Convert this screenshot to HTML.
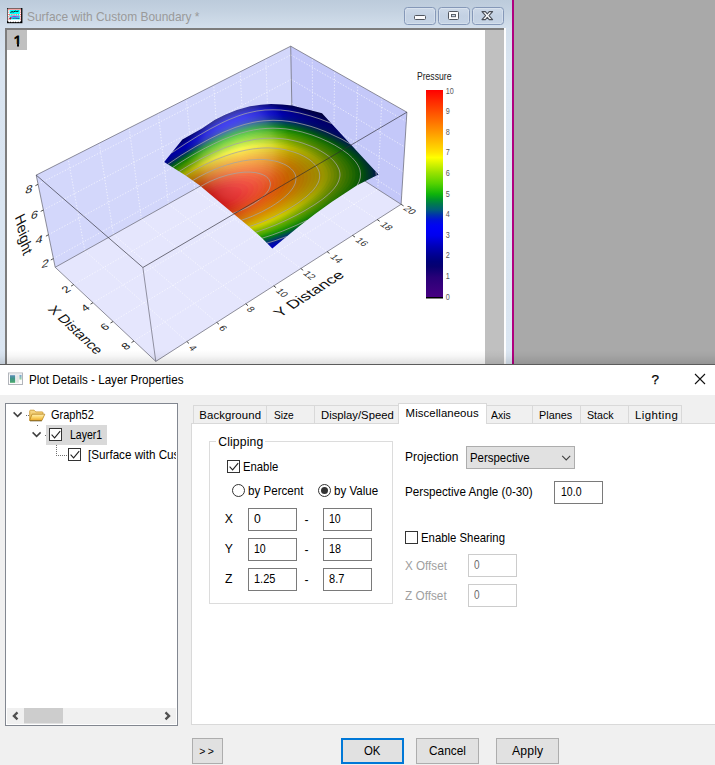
<!DOCTYPE html>
<html lang="en">
<head>
<meta charset="utf-8">
<title>Plot Details - Layer Properties</title>
<style>
html,body{margin:0;padding:0;}
body{width:715px;height:765px;overflow:hidden;position:relative;background:#f0f0f0;
  font-family:"Liberation Sans",Arial,sans-serif;font-size:12.2px;color:#000;}
.abs,.t{position:absolute;}
.t{white-space:nowrap;line-height:16px;height:16px;transform-origin:0 50%;}
#top{position:absolute;left:0;top:0;width:715px;height:365px;background:#a9a9a9;overflow:hidden;}
#frame{position:absolute;left:0;top:0;width:512px;height:365px;
  background:linear-gradient(#bccbdb 0px,#c3d1e0 10px,#d3dfec 28px,#d9e4f0 60px,#dbe6f2 365px);}
#mag{position:absolute;left:512px;top:0;width:2px;height:365px;background:#b0007f;}
#wl{position:absolute;left:504px;top:28px;width:2px;height:337px;background:#fdfdfe;}
#shadow{position:absolute;left:0;top:350px;width:715px;height:14px;background:linear-gradient(rgba(0,0,0,0),rgba(0,0,0,0.03) 40%,rgba(0,0,0,0.12));}
#client{position:absolute;left:5px;top:28px;width:499px;height:337px;background:#c0c0c0;
  border-left:2px solid #7d7d7d;border-top:2px solid #7d7d7d;box-sizing:border-box;}
#page{position:absolute;left:7px;top:30px;width:478px;height:334px;background:#fff;}
#one{position:absolute;left:7px;top:30px;width:20px;height:20px;background:#c0c0c0;}
#topline{position:absolute;left:0;top:364px;width:715px;height:1px;background:#5c5c5c;}
.wbtn{position:absolute;top:7px;height:18px;box-sizing:border-box;border:1px solid #8598b8;border-radius:3.5px;
  background:linear-gradient(#cdd9e8,#c3d1e3 50%,#c6d4e5);box-shadow:inset 0 0 0 1px rgba(255,255,255,0.25);}
#dlgtitle{position:absolute;left:0;top:365px;width:715px;height:30px;background:#fff;}
#tree{position:absolute;left:5px;top:403px;width:173px;height:323px;box-sizing:border-box;border:1px solid #828790;background:#fff;overflow:hidden;}
.tab{position:absolute;top:405px;height:19px;box-sizing:border-box;border:1px solid #d9d9d9;border-bottom:none;background:#f0f0f0;}
#tabsel{position:absolute;left:398px;top:403px;width:89px;height:21px;box-sizing:border-box;border:1px solid #d9d9d9;border-bottom:none;background:#fff;}
#panel{position:absolute;left:191px;top:423px;width:540px;height:302px;box-sizing:border-box;border:1px solid #d9d9d9;background:#fff;}
.inp{position:absolute;box-sizing:border-box;border:1px solid #7a7a7a;background:#fff;height:23px;}
.inp.dis{border-color:#cccccc;}
.cb{position:absolute;width:13px;height:13px;box-sizing:border-box;border:1px solid #333;background:#fff;}
.rb{position:absolute;width:13px;height:13px;box-sizing:border-box;border:1px solid #333;border-radius:50%;background:#fff;}
.btn{position:absolute;top:738px;height:26px;box-sizing:border-box;border:1px solid #adadad;background:#e1e1e1;}
svg{position:absolute;overflow:visible;}
</style>
</head>
<body>
<!-- ================= graph window ================= -->
<div id="top">
  <div id="frame"></div>
  <div id="client"></div>
  <div id="page"></div>
  <div id="one"></div>
  <div id="wl"></div>
  <div id="mag"></div>
  <svg id="plot" style="left:0;top:0" width="511" height="365" viewBox="0 0 511 365" font-family="'Liberation Sans',Arial,sans-serif">
<defs><clipPath id="sil"><polygon points="164.2,162 182.4,139.6 202,128.4 214.5,120 225,114.8 236.8,109.9 250,106.2 261,104.7 271,104.1 282,104.4 292,105.5 308.7,109.7 322,113.2 378.5,174.5 357.1,185.3 332,201.7 315,214 298.9,226.5 284.9,238 272.3,248.5 261.2,237.3 248.6,226.2 233.2,213.6 215,198.2 199.2,185 185.2,175.2"/></clipPath>
<radialGradient id="lit" gradientUnits="userSpaceOnUse" cx="0" cy="0" r="1" gradientTransform="translate(240 147) rotate(-17.5) scale(130 300)"><stop offset="0" stop-color="#000" stop-opacity="0.03"/><stop offset="0.12" stop-color="#000" stop-opacity="0.08"/><stop offset="0.25" stop-color="#000" stop-opacity="0.17"/><stop offset="0.42" stop-color="#000" stop-opacity="0.31"/><stop offset="0.6" stop-color="#000" stop-opacity="0.42"/><stop offset="0.95" stop-color="#000" stop-opacity="0.55"/><stop offset="1" stop-color="#000" stop-opacity="0.56"/></radialGradient>
<radialGradient id="lit2" gradientUnits="userSpaceOnUse" cx="0" cy="0" r="1" gradientTransform="translate(238 152) scale(52 72)"><stop offset="0" stop-color="#fff" stop-opacity="0.31"/><stop offset="0.3" stop-color="#fff" stop-opacity="0.29"/><stop offset="0.5" stop-color="#fff" stop-opacity="0.25"/><stop offset="0.66" stop-color="#fff" stop-opacity="0.19"/><stop offset="0.8" stop-color="#fff" stop-opacity="0.09"/><stop offset="1" stop-color="#fff" stop-opacity="0"/></radialGradient>
<radialGradient id="lit3" gradientUnits="userSpaceOnUse" cx="0" cy="0" r="1" gradientTransform="translate(322 100) rotate(30) scale(85 38)"><stop offset="0" stop-color="#000" stop-opacity="0.34"/><stop offset="0.5" stop-color="#000" stop-opacity="0.24"/><stop offset="1" stop-color="#000" stop-opacity="0"/></radialGradient>
<linearGradient id="cbar" x1="0" y1="0" x2="0" y2="1"><stop offset="0%" stop-color="#ff0000"/><stop offset="2.5%" stop-color="#ff1300"/><stop offset="5%" stop-color="#ff2600"/><stop offset="7.5%" stop-color="#ff3800"/><stop offset="10%" stop-color="#ff4b00"/><stop offset="12.5%" stop-color="#ff5e00"/><stop offset="15%" stop-color="#ff7000"/><stop offset="17.5%" stop-color="#ff8300"/><stop offset="20%" stop-color="#ff9600"/><stop offset="22.5%" stop-color="#ffaa00"/><stop offset="25%" stop-color="#ffbd00"/><stop offset="27.5%" stop-color="#ffd000"/><stop offset="30%" stop-color="#ffe400"/><stop offset="32.5%" stop-color="#ffff00"/><stop offset="35%" stop-color="#dcf500"/><stop offset="37.5%" stop-color="#b9eb00"/><stop offset="40%" stop-color="#96e100"/><stop offset="42.5%" stop-color="#76da00"/><stop offset="45%" stop-color="#55d200"/><stop offset="47.5%" stop-color="#32c305"/><stop offset="50%" stop-color="#0fb40a"/><stop offset="52.5%" stop-color="#009628"/><stop offset="55%" stop-color="#007850"/><stop offset="57.5%" stop-color="#005f78"/><stop offset="60%" stop-color="#0034aa"/><stop offset="62.5%" stop-color="#0012d9"/><stop offset="65%" stop-color="#0005f2"/><stop offset="67.5%" stop-color="#0000f7"/><stop offset="70%" stop-color="#0000ee"/><stop offset="72.5%" stop-color="#0000d4"/><stop offset="75%" stop-color="#0000b9"/><stop offset="77.5%" stop-color="#0000a2"/><stop offset="80%" stop-color="#00008c"/><stop offset="82.5%" stop-color="#000079"/><stop offset="85%" stop-color="#070070"/><stop offset="87.5%" stop-color="#170074"/><stop offset="90%" stop-color="#280078"/><stop offset="92.5%" stop-color="#30007a"/><stop offset="95%" stop-color="#38007d"/><stop offset="97.5%" stop-color="#400080"/><stop offset="100%" stop-color="#480082"/></linearGradient>
</defs>
<polygon points="55.2,267.3 155.8,361.4 401.1,204.3 292.4,134.5" fill="#e5e6fd"/>
<polygon points="36.2,175.1 55.2,267.3 292.4,134.5 290.7,46.2" fill="#d3d7fb"/>
<polygon points="290.7,46.2 292.4,134.5 401.1,204.3 406.9,112.2" fill="#c4c8f9"/>
<path d="M73.7 284.6L312.6 147.5M312.6 147.5L312.3 58.4M93 302.7L333.6 160.9M333.6 160.9L334.6 71.1M113.1 321.5L355.3 174.9M355.3 174.9L357.8 84.3M134 341L377.8 189.3M377.8 189.3L381.9 98M84.8 250.7L186.8 341.5M84.8 250.7L68.2 158.9M113.5 234.6L216.7 322.4M113.5 234.6L99.2 143.2M141.4 219L245.7 303.8M141.4 219L129.2 128M168.4 203.9L273.7 285.9M168.4 203.9L158.3 113.3M194.7 189.2L300.8 268.5M194.7 189.2L186.4 99M220.1 174.9L327.1 251.7M220.1 174.9L213.7 85.2M244.9 161L352.5 235.4M244.9 161L240.1 71.8M269 147.6L377.2 219.6M269 147.6L265.8 58.8M53.4 258.6L292.2 126M292.2 126L401.7 195.6M48.5 234.7L291.8 103.1M291.8 103.1L403.2 171.7M43.4 210L291.3 79.4M291.3 79.4L404.7 147M38.1 184.3L290.9 55M290.9 55L406.3 121.4" fill="none" stroke="#ffffff" stroke-width="0.75" stroke-opacity="0.82" stroke-dasharray="1.3 1.7"/>
<path d="M55.2 267.3L292.4 134.5M292.4 134.5L401.1 204.3M290.7 46.2L292.4 134.5M36.2 175.1L290.7 46.2M290.7 46.2L406.9 112.2M36.2 175.1L55.2 267.3M55.2 267.3L155.8 361.4M155.8 361.4L401.1 204.3M401.1 204.3L406.9 112.2" fill="none" stroke="#62626e" stroke-width="0.7"/>
<g clip-path="url(#sil)"><g opacity="0.999">
<rect x="150" y="90" width="245" height="175" fill="#00008c"/>
<path d="M326 115.7 312 110.8 301 107.7 292 105.8 282 104.4 276 103.9 272 103.8 263 104.2 258 104.8 253 105.7 245 107.8 239 109.7 231 112.9 224 116.1 217 119.7 208 124.7 201 128.8 190 135.7 179 142.9 177.1 144.2 163.3 161.2 163 161.8 163.1 162.4 163.6 163 184.5 176.2 198.5 186 232.4 214.5 247.8 227.1 260.4 238.2 271.5 249.4 272.1 249.7 272.7 249.6 299.6 227.4 315.7 215 332.7 202.7 357.7 186.3 379 175.6 379.6 174.9 379.7 174.2 379.4 173.7Z" fill="#00009c"/>
<path d="M327.3 117.2 315 112.7 304 109.4 293 106.9 283 105.4 274 104.8 265 105.1 256 106.2 247 108.2 241 110 234 112.6 228 115.2 221 118.5 213 122.8 205 127.3 187 138.5 175.6 146 163.3 161.2 163 161.8 163.1 162.4 163.6 163 184.5 176.2 198.5 186 232.4 214.5 247.8 227.1 260.4 238.2 271.5 249.4 272.1 249.7 272.7 249.6 299.6 227.4 315.7 215 332.7 202.7 357.7 186.3 379 175.6 379.6 175 379.7 174.3 379.4 173.7Z" fill="#0000a9"/>
<path d="M328.6 118.6 316 114 305 110.6 294 108 284 106.5 275 105.8 266 106 257 107 248 108.9 242 110.7 236 112.8 230 115.3 224 118 217 121.5 210 125.4 193 135.5 174.2 147.8 163.3 161.2 163 162.3 163.6 163 184.5 176.2 198.5 186 232.4 214.5 247.8 227.1 260.4 238.2 271.5 249.4 272.1 249.7 272.7 249.6 299.6 227.4 315.7 215 332.7 202.7 357.7 186.3 379 175.6 379.6 175 379.7 174.3 379.4 173.7Z" fill="#0000b7"/>
<path d="M329.9 120 318 115.6 307 112.1 296 109.4 286 107.7 276 106.8 267 106.9 258 107.8 249 109.7 244 111 238 113 232 115.4 226 118 213 124.6 197 133.9 185 141.5 172.7 149.6 163.3 161.2 163 162.3 163.6 163 184.5 176.2 198.5 186 232.4 214.5 247.8 227.1 260.4 238.2 271.5 249.4 272.5 249.7 273.1 249.4 299.6 227.4 315.7 215 332.7 202.7 357.7 186.3 379 175.6 379.6 175 379.7 174.3 379.4 173.7Z" fill="#0000c6"/>
<path d="M331 121.4 319 116.8 308 113.3 297 110.5 287 108.8 277 107.8 268 107.8 259 108.7 250 110.4 245 111.7 239 113.7 234 115.5 228 118.1 222 120.9 215 124.5 201 132.4 186 141.7 171.2 151.4 163.3 161.2 163 162.3 163.6 163 184.5 176.2 198.5 186 232.4 214.5 247.8 227.1 260.4 238.2 271.5 249.4 272.5 249.7 273.1 249.4 299.6 227.4 315.7 215 332.7 202.7 357.7 186.3 379 175.6 379.6 175 379.7 174.3 379.4 173.7Z" fill="#0000d6"/>
<path d="M332.6 123 320 118.1 309 114.5 298 111.7 288 109.8 278 108.9 269 108.8 260 109.5 251 111.2 246 112.4 240 114.3 235 116.1 229 118.6 217 124.3 204 131.5 187 141.8 169.8 153.3 163.3 161.2 163 162.3 163.6 163 184.5 176.2 198.5 186 232.4 214.5 247.8 227.1 260.4 238.2 271.5 249.4 272.5 249.7 273.1 249.4 299.6 227.4 315.7 215 332.7 202.7 357.7 186.3 379 175.6 379.6 175 379.7 174.3 379.4 173.7Z" fill="#0000e6"/>
<path d="M334 124.6 328 122 320 119 310.8 116 299.6 113 289.3 111 280.7 110 269 109.8 264.9 110 257 111 251.8 112 244 114 238 116 232.8 118 228 120 221.6 123 210 129 197.9 136 188.1 142 169.9 154 168.1 155.3 163.2 161.3 163 162.3 163.6 163 184.5 176.2 198.5 186 232.4 214.5 247.8 227.1 260.4 238.2 271.5 249.4 272.5 249.7 273.1 249.4 299.6 227.4 315.7 215 332.7 202.7 357.7 186.3 379 175.6 379.6 175 379.7 174.3 379.4 173.7Z" fill="#0000f1"/>
<path d="M336.2 127 324 122 312.4 118 301 114.9 291 112.8 281 111.6 272 111.3 267 111.5 262 111.9 253 113.3 248 114.5 243 115.9 233 119.5 222 124.3 210 130.5 201 135.6 192 140.9 182 147.2 173 153.2 165.8 158.2 163.2 161.3 163 162.3 163.6 163 184.5 176.2 198.5 186 232.4 214.5 247.8 227.1 260.4 238.2 271.3 249.2 274.4 248.3 299.6 227.4 315.7 215 332.7 202.7 357.7 186.3 379 175.6 379.5 175.1 379.7 174.3 379.4 173.7Z" fill="#0000f6"/>
<path d="M339 129.8 326 124.3 315 120.4 304 117.2 293 114.7 283 113.4 274 112.9 269 113 264 113.3 255 114.6 246 116.7 236 119.9 225 124.5 214 129.8 200 137.6 184 147.3 174 153.8 164 160.7 163.2 161.3 163 162.3 163.6 163 184.5 176.2 198.5 186 232.4 214.5 247.8 227.1 260.4 238.2 270.3 248.2 276.9 246.2 299.6 227.4 315.7 215 332.7 202.7 357.7 186.3 379 175.6 379.5 175.1 379.7 174.3 379.4 173.7Z" fill="#0000fb"/>
<path d="M341.6 132.7 329 127.1 318 123 307 119.5 296 116.9 286 115.3 276 114.5 271 114.5 266 114.8 257 115.8 248 117.7 238 120.8 228 124.7 217 129.8 205 136.2 191 144.3 176 153.8 163.2 162.7 184.5 176.2 198.5 186 232.4 214.5 247.8 227.1 260.4 238.2 269.3 247.2 279.5 244 299.6 227.4 315.7 215 332.7 202.7 357.7 186.3 379 175.6 379.5 175.1 379.7 174.3 379.4 173.7Z" fill="#0006ef"/>
<path d="M344.6 135.9 332 130 321 125.6 309 121.7 298 118.9 287 117 277 116.2 272 116.1 267 116.3 258 117.3 249 119.1 239 122 229 125.8 218 130.8 205 137.6 191 145.7 177 154.5 164.1 163.3 184.5 176.2 198.5 186 232.4 214.5 247.8 227.1 260.4 238.2 268.3 246.2 282.3 241.8 299.6 227.4 315.7 215 332.7 202.7 357.7 186.3 379 175.6 379.5 175.2 379.7 174.4 379.4 173.7Z" fill="#000ee0"/>
<path d="M347.8 139.4 336 133.5 324 128.4 312 124.2 301 121.1 290 119 280 117.9 275 117.7 270 117.8 265 118.1 260 118.6 255 119.4 250 120.4 240 123.3 230 126.9 219 131.8 206 138.5 192 146.5 178 155.2 165.1 164 184.5 176.2 198.5 186 232.4 214.5 247.8 227.1 260.4 238.2 267.3 245.2 276 242.5 285.1 239.4 299.6 227.4 315.7 215 332.7 202.7 357.7 186.3 379 175.6 379.5 175.2 379.7 174.4 379.4 173.7Z" fill="#0018cf"/>
<path d="M351.6 143.5 345.5 140 339.7 137 328 131.6 316 127.1 304 123.5 293 121.1 287 120.2 282 119.7 272 119.3 267 119.5 262 120 257 120.6 252 121.6 242 124.2 231 128.1 220 132.8 207 139.4 193 147.2 179 155.9 166.1 164.6 184.5 176.2 198.5 186 232.4 214.5 247.8 227.1 260.4 238.2 266.3 244.2 277 240.8 288.2 236.8 299.6 227.4 315.7 215 332.7 202.7 357.7 186.3 378.3 176 378.1 172.3Z" fill="#0030af"/>
<path d="M356 148.3 347 142.6 340 138.8 334 135.8 322 130.7 310 126.6 299 123.7 294 122.7 287 121.6 280 121 275 120.7 270 120.8 264 121.2 259 121.8 254 122.6 245 124.7 239 126.5 233 128.7 221 133.7 209 139.6 196 146.7 181 155.8 167 165.2 184.5 176.2 198.5 186 232.4 214.5 247.8 227.1 260.4 238.2 265.4 243.3 278 239.3 291.2 234.4 299.6 227.4 315.7 215 332.7 202.7 357.7 186.3 375.2 177.5 375.4 175 375.3 173 374.8 170 374 167.9Z" fill="#004a91"/>
<path d="M362.1 155 358 151.6 353.1 148 348 144.7 342 141.2 335.7 138 329.3 135 322.1 132 316 129.8 309 127.5 303 125.8 297 124.5 291 123.3 285 122.5 279 122.1 273 121.9 268 122.1 263 122.5 258 123.1 253 124 247 125.4 242 126.8 236 128.7 224 133.5 211 139.6 196 147.7 181 156.8 167.7 165.6 184.5 176.2 198.5 186 232.4 214.5 247.8 227.1 260.4 238.2 264.7 242.5 278.7 238 293.8 232.3 299.6 227.4 315.7 215 332.7 202.7 357.7 186.3 372.6 178.8 373.1 176 373 173 372.5 170 371.4 167 369.8 164 367.7 161Z" fill="#006274"/>
<path d="M369.9 180.2 370.7 176 370.6 172 369.5 168 368.6 166 366.8 163 363.7 159 359 154.4 353.5 150 347.6 146 339 141 331 137.1 323 133.6 314 130.3 305 127.5 297 125.6 289 124.2 281 123.4 275 123.1 269 123.2 263 123.6 257 124.4 251 125.6 245 127 239 128.8 232 131.3 225 134.1 218 137.2 210 141.2 202 145.4 193 150.5 185 155.3 176 161 168.5 166.1 184.5 176.2 198.5 186 232.4 214.5 247.8 227.1 260.4 238.2 264 241.8 272 239.3 280 236.5 296.4 230.1 315.7 215 332.7 202.7 357.7 186.3Z" fill="#00705c"/>
<path d="M367 181.6 368.3 177 368.4 173 367.5 169 366.7 167 365.1 164 362.2 160 358.4 156 353.8 152 347 147.2 340 143 332 138.9 323 134.9 314 131.5 305.9 129 297 126.8 289 125.4 281 124.5 275 124.3 269 124.4 263 124.8 257 125.6 251 126.7 245 128.2 239 129.9 232 132.4 225 135.2 218 138.3 210 142.2 202 146.4 193 151.5 185 156.2 177 161.3 169.2 166.6 184.5 176.2 198.5 186 232.4 214.5 247.8 227.1 260.4 238.2 263.2 241.1 272 238.3 281 235.1 290 231.7 299.2 227.8 315.7 215 332.7 202.7 357.7 186.3Z" fill="#008144"/>
<path d="M364 183.1 365.5 179 366.1 175 365.7 171 365 168.5 363.9 166 361.5 162 358.1 158 353.8 154 348 149.6 340.9 145 333.5 141 325 137 316 133.4 308 130.8 299 128.4 290 126.7 282 125.8 276 125.5 270 125.5 264 125.8 258 126.6 252 127.6 246 129 240 130.7 233 133.1 226 135.8 219 138.9 211 142.7 203 146.9 195 151.3 186 156.6 178 161.6 170 167 184.5 176.2 198.5 186 232.4 214.5 247.8 227.1 260.4 238.2 262.5 240.3 272 237.3 282 233.7 292 229.8 302.6 225.1 315.7 215 332.7 202.7 357.7 186.3Z" fill="#00932c"/>
<path d="M360.6 184.9 362.9 180 363.7 176 363.6 172 362.5 168 360.4 164 359.1 162 357 159.4 352.5 155 347.5 151 341 146.6 333 142.1 325 138.3 316.8 135 308 132 300 129.9 291 128.1 283 127 276 126.6 270 126.6 264 127 258 127.7 252 128.8 246 130.2 240 131.9 233 134.2 226 136.9 219 140 211 143.8 203 147.9 195 152.3 186 157.6 178 162.6 170.7 167.5 184.5 176.2 198.5 186 232.4 214.5 247.8 227.1 260.4 238.2 261.8 239.6 273 236 283.8 232 295 227.4 306.3 222.2 315.7 215 332.7 202.7 357.7 186.3Z" fill="#08a519"/>
<path d="M357 186.7 358.7 184 359.7 182 361 178 361.4 174 360.8 170 359.2 166 356.7 162 353 157.7 347.7 153 340.6 148 333.8 144 325.7 140 318 136.7 309 133.6 299.7 131 293 129.6 284 128.3 278 127.9 272 127.8 266 128 259 128.7 253 129.7 247.1 131 241 132.7 234 134.9 226 138 219 141 211 144.8 203 148.9 195.5 153 187 158 179 162.9 171.4 168 184.5 176.2 198.5 186 232.4 214.5 247.8 227.1 261.1 238.9 273 235 286 230.1 297.9 225 310.5 219 315.7 215 332.7 202.7Z" fill="#13b609"/>
<path d="M350.6 191 353 188.2 354.6 186 356.9 182 358.2 178 358.5 174 357.9 170 356.4 166 353.9 162 352 159.7 349.4 157 344 152.5 337.5 148 330 143.8 321 139.5 312 136.1 303 133.3 294 131.2 286 129.9 279 129.3 273 129.1 267 129.3 261 129.8 255 130.7 248 132.1 242 133.7 235 135.9 228 138.5 221 141.4 213 145 205 149 197 153.3 188 158.5 180 163.4 172.3 168.5 184.5 176.2 198.5 186 232.4 214.5 247.8 227.1 260.2 238 273 233.8 286 228.8 299.2 223 313.5 216 316.4 214.5 332.7 202.7Z" fill="#27be07"/>
<path d="M338 199.2 343.2 195 348.4 190 350.8 187 352.2 185 354.2 181 355.1 178 355.4 176 355.5 174 355.3 172 354.9 170 354 167.5 352.8 165 351.5 163 348 158.8 342.7 154 335.6 149 328 144.6 319 140.4 310 137 301 134.3 292 132.4 285 131.3 279 130.8 272 130.6 266 130.9 260 131.4 253 132.5 246 134.1 239 136 232 138.3 224 141.4 216 144.9 207 149.3 199 153.5 190 158.6 181 164.1 173.3 169.1 184.5 176.2 198.5 186 232.4 214.5 247.8 227.1 259.2 237.1 269 234 279.7 230 290 225.7 301 220.7 312.3 215 321.3 210 328.7 205.5 332.7 202.7Z" fill="#3dc803"/>
<path d="M258.2 236.2 270 232.3 281.3 228 292.8 223 305 217.1 315 211.8 324.9 206 333.8 200 340.1 195 345.2 190 348.4 186 350.2 183 351.1 181 352.2 177 352.4 174 352.2 172 351.1 168 349 164 345.9 160 343 157 339.4 154 336 151.5 332 148.9 326.9 146 322 143.6 316.1 141 310.9 139 305 137.1 300 135.7 294 134.3 289 133.4 283 132.7 278 132.3 272 132.1 267 132.3 257 133.3 247 135.2 236 138.4 225 142.4 212 148.1 199 154.7 186 162.2 174.3 169.7 184.5 176.2 198.5 186 232.4 214.5 247.8 227.1Z" fill="#52d100"/>
<path d="M257.2 235.4 269 231.4 280 227.2 291 222.4 302.1 217 313 211.2 321.8 206 330.7 200 337 195 342.1 190 345.3 186 347.6 182 348.9 178 349.3 175 349.2 173 348.9 171 348.4 169 346.5 165 343.6 161 340.8 158 337.4 155 334 152.5 330.2 150 326 147.5 321 145 316 142.7 310 140.4 305 138.7 299 137 294 135.9 288 134.8 282 134.1 277 133.7 272 133.6 267 133.8 257 134.8 247 136.7 236 139.7 225 143.7 213 148.9 200 155.5 187 162.8 175.2 170.3 184.5 176.2 198.5 186 232.4 214.5 247.8 227.1Z" fill="#65d600"/>
<path d="M256.2 234.5 267 230.9 278 226.6 288.7 222 300 216.5 310.3 211 320.3 205 327.6 200 333.9 195 339 190 342.2 186 344.5 182 345.8 178 346.2 175 346.1 173 345.8 171 345.2 169 343.3 165 340.4 161 337.5 158 334 155 330 152.1 326.6 150 322 147.4 317 145 312 142.9 307 141.1 302 139.5 296.3 138 291 136.9 286 136.1 281 135.5 276 135.2 271 135.1 266 135.3 256 136.4 246 138.3 236 141.1 225 145.1 213 150.2 200 156.7 188 163.5 176.2 171 184.5 176.2 198.5 186 232.4 214.5 247.8 227.1Z" fill="#79da00"/>
<path d="M255.2 233.6 266 230 277 225.7 287.7 221 299 215.4 308.9 210 318.7 204 325.8 199 331.9 194 336.8 189 339.8 185 341.8 181 342.9 177 343.1 175 343 173 342.7 171 342.1 169 340.2 165 337.1 161 335 158.8 331.8 156 327.7 153 324 150.7 319.2 148 315 146 310 143.9 305 142.1 300 140.6 295 139.3 290 138.3 285 137.5 280 137 275 136.7 270 136.7 265 136.9 255 138 245 140 235 142.8 224 146.8 212 152 200 158 188 164.7 177.2 171.6 184.5 176.2 198.5 186 232.4 214.5 247.8 227.1Z" fill="#8cdf00"/>
<path d="M254.2 232.7 266 228.7 276 224.8 286 220.3 296 215.4 305 210.5 315 204.4 322.8 199 328.8 194 333.7 189 336.7 185 338.7 181 339.8 177 340 175 339.9 173 339.5 171 338.9 169 336.9 165 333.8 161 331 158.2 328.4 156 325 153.6 320.8 151 316 148.4 312 146.6 303 143.2 298 141.7 293 140.5 288 139.5 283 138.8 274 138.2 264 138.4 254 139.6 244 141.6 234 144.5 223 148.5 212 153.3 200 159.2 189 165.4 178.1 172.2 184.5 176.2 198.5 186 232.4 214.5 247.8 227.1Z" fill="#a1e400"/>
<path d="M253.2 231.8 264 228.2 274 224.3 283.7 220 293.8 215 304 209.4 312.7 204 319.8 199 325.9 194 330.7 189 333.7 185 335.7 181 336.8 177 336.9 175 336.8 173 336.5 171 335.9 169 335 167 333.8 165 330.6 161 328 158.5 324.9 156 322 154 318 151.5 310 147.6 301 144.3 292 141.9 287 140.9 282 140.2 273 139.6 268 139.6 263 139.9 254 140.9 244 143 234 145.8 224 149.4 213 154 201 159.9 190 166 179.1 172.8 184.5 176.2 198.5 186 232.4 214.5 247.8 227.1Z" fill="#b6ea00"/>
<path d="M252.2 231 263 227.3 273 223.4 282.8 219 292.8 214 301.8 209 309.8 204 316.9 199 322.9 194 327.8 189 330.7 185 332.7 181 333.4 179 333.8 177 333.9 175 333.8 173 333.4 171 332.8 169 331 165.6 328.3 162 326 159.7 322.8 157 320 155 316 152.6 312 150.5 308 148.6 303.9 147 299 145.4 290 143.1 281 141.7 272 141.1 267 141.1 262 141.4 253 142.5 243 144.6 233 147.4 223 151 212 155.7 201 161.1 190 167.2 180 173.4 184.5 176.2 198.5 186 232.4 214.5 247.8 227.1Z" fill="#caf000"/>
<path d="M251.3 230.1 261 226.9 270.8 223 280 218.9 289.9 214 298.9 209 306.9 204 314 199 320 194 324.8 189 327.7 185 329.7 181 330.4 179 330.7 177 330.9 175 330.7 173 330.3 171 329.7 169 328.7 167 327.4 165 325 162 322 159.2 319.3 157 313 153.1 309 151 305 149.3 297 146.5 288 144.3 279 143 270 142.5 261 142.9 252 144 243 145.9 233 148.7 223 152.3 212 156.9 201 162.3 191 167.8 181 174 184.5 176.2 198.5 186Z" fill="#e0f600"/>
<path d="M250.3 229.3 260 226 270.1 222 279 218 288.9 213 297.7 208 305.6 203 312.4 198 318.2 193 321.9 189 324.8 185 326.7 181 327.4 179 327.7 177 327.8 175 327.7 173 327.2 171 326.5 169 325.5 167 324.2 165 321.7 162 319.5 160 317 158 314.1 156 310.8 154 306.8 152 303 150.3 295 147.6 287 145.7 278 144.4 269 144 260 144.4 251 145.6 242 147.5 233 150 223 153.5 213 157.7 202 163 192 168.4 182 174.6 184.5 176.2 198.5 186 232.4 214.5Z" fill="#f4fc00"/>
<path d="M249.3 228.4 259 225.2 268 221.6 277 217.6 286 213 294.9 208 302.7 203 309.5 198 314.2 194 318.1 190 321.2 186 323.4 182 324.1 180 324.6 178 324.8 176 324.7 174 324.4 172 323.8 170 322.9 168 321.7 166 319.2 163 317.2 161 314.8 159 311.9 157 308.5 155 304.6 153 301 151.5 293 148.8 285 146.9 276 145.7 268 145.4 259 145.9 250 147.1 241 149 232 151.6 222 155.2 212 159.3 202 164.2 192 169.6 182.9 175.2 198.5 186 232.4 214.5Z" fill="#fff700"/>
<path d="M248.4 227.6 258 224.3 267 220.7 276 216.6 285.1 212 293.7 207 301.3 202 307.9 197 312.4 193 316.1 189 318.9 185 320.8 181 321.4 179 321.7 177 321.7 175 321.5 173 320.6 170 319.7 168 318.4 166 315.8 163 313.7 161 311.1 159 308 157 305 155.3 298 152.2 291 149.9 283 148.2 275 147.2 267 146.9 258 147.4 250 148.5 241 150.3 232 152.9 222 156.4 212 160.5 202 165.3 193 170.2 183.9 175.8 198.5 186 232.4 214.5Z" fill="#ffe700"/>
<path d="M247.4 226.7 256 223.8 265.5 220 274.3 216 282.1 212 290 207.5 296.9 203 303.7 198 308.3 194 312.2 190 315.2 186 317.3 182 318 180 318.4 178 318.5 176 318.4 174 317.7 171 316.8 169 315.6 167 313.2 164 311 162 308.5 160 303 156.6 299.7 155 296 153.5 289 151.3 281 149.6 273 148.7 265 148.5 257 149 249 150.1 239.9 152 231 154.5 221.2 158 211.6 162 203 166.1 193.8 171 184.9 176.4 198.5 186 232.4 214.5Z" fill="#ffda00"/>
<path d="M246.2 225.8 255 222.7 264 219.1 272 215.5 280 211.3 287.5 207 293.7 203 300.4 198 305 194 308.8 190 311.8 186 313.8 182 314.7 179 314.9 177 314.9 175 314.3 172 313.5 170 312.4 168 310 165 308 163 305.4 161 300.6 158 294 155 287 152.8 280 151.3 272 150.4 264 150.2 256 150.7 248 151.8 240 153.5 231 156 222 159.1 212 163.2 203 167.5 194 172.3 185.9 177.2 198.5 186 232.4 214.5Z" fill="#ffcf00"/>
<path d="M245 224.8 254 221.7 262 218.5 270 214.8 278 210.7 285.9 206 291.9 202 298.4 197 302.8 193 306.3 189 309 185 310.7 181 311.3 178 311.4 176 311.1 174 310.2 171 308.5 168 305.9 165 302 161.8 297 158.8 291 156.2 284 154.1 277 152.8 270 152 262 151.9 254 152.5 246 153.7 238 155.5 230 157.8 221 160.9 212 164.6 203 168.8 195 173.1 187 177.9 198.5 186 232.4 214.5Z" fill="#ffc300"/>
<path d="M243.8 223.9 252 221.1 259.6 218 267 214.7 274.1 211 281.1 207 287.3 203 294 198 298.5 194 302.2 190 305.1 186 306.9 182 307.7 179 307.8 177 307.7 175 306.8 172 305.2 169 302.7 166 299.1 163 294.1 160 288 157.4 282 155.7 275 154.4 268 153.7 261 153.7 253 154.2 245 155.5 237 157.2 229 159.5 221 162.3 213 165.5 204 169.7 196 173.9 188.1 178.7 198.5 186 232.4 214.5Z" fill="#ffb700"/>
<path d="M242.7 222.9 251 220 258.5 217 266 213.5 272.8 210 279.6 206 285.6 202 290.8 198 295.3 194 299 190 301.1 187 303.2 183 304 180 304.3 178 304.2 176 303.5 173 301.9 170 299.5 167 295.9 164 291 161.2 285.8 159 280 157.3 274 156.1 267 155.5 260 155.4 252 156 245 157 237 158.7 229 161 221 163.7 212 167.3 204 171.1 196 175.3 189.2 179.4 198.5 186 232.4 214.5Z" fill="#ffab00"/>
<path d="M241.5 222 249 219.4 256 216.6 263 213.4 270 209.8 276.4 206 282.5 202 287.7 198 292.1 194 295.7 190 297.8 187 299.8 183 300.6 180 300.7 177 300.1 174 298.6 171 296.2 168 293 165.3 289 162.9 284 160.7 278 158.9 272 157.8 265 157.2 258 157.1 251 157.7 244 158.7 236 160.4 229 162.4 221 165.1 213 168.3 205 172 197.3 176 190.3 180.2 198.5 186 232.4 214.5Z" fill="#ffa000"/>
<path d="M240.4 221 248 218.4 254 216 260.6 213 268.3 209 274 205.6 279.4 202 284.6 198 289 194 292.5 190 294.6 187 296.1 184 297 181 297.2 178 296.6 175 295.3 172 292.9 169 289.2 166 285.7 164 280.9 162 275 160.3 269 159.3 263 158.9 256 158.9 249 159.5 242 160.6 235.6 162 228.4 164 220 166.8 213 169.6 205.6 173 198 177 191.3 181 198.5 186 232.4 214.5Z" fill="#ff9400"/>
<path d="M239.1 220 247 217.3 253 214.8 259.1 212 266 208.4 271.6 205 277.5 201 282.5 197 285.6 194 289.1 190 291.1 187 292.5 184 293.2 181 293.3 178 292.6 175 291 172.1 289.2 170 286 167.4 282 165.2 277 163.2 272.2 162 267 161.2 261 160.7 255 160.7 248 161.3 241 162.4 234 164 227 165.9 220 168.3 213 171.1 206 174.3 199 177.9 192.5 181.8 198.5 186Z" fill="#ff8900"/>
<path d="M237.8 218.9 245 216.5 251 214 257.5 211 263.2 208 269 204.5 274.1 201 279.1 197 282.2 194 284.8 191 286.9 188 288.4 185 289.3 182 289.4 179 288.7 176 287.1 173 285.3 171 282 168.5 278 166.4 274 164.9 269 163.7 264 163 258 162.6 252 162.8 246 163.3 240 164.3 233 165.8 226 167.8 219 170.2 212 173.1 206 175.8 199.9 179 193.8 182.7 198.5 186 232.4 214.5Z" fill="#ff7e00"/>
<path d="M236.5 217.9 243 215.7 249 213.3 254 211 259.8 208 264.9 205 269.4 202 273.3 199 277.8 195 280.6 192 282.8 189 284.4 186 285.3 183 285.5 180 285 177.4 283.9 175 282 172.6 279 170.2 276 168.5 272 166.9 267 165.6 262 164.9 257 164.5 251 164.6 245 165.2 239 166.1 233 167.4 226 169.4 220 171.4 213 174.1 207 176.9 200.9 180 195 183.5 198.5 186Z" fill="#ff7200"/>
<path d="M235.3 216.8 242 214.5 247 212.5 252.5 210 258.2 207 263.1 204 267.5 201 271.3 198 274.5 195 277.2 192 279.3 189 280.8 186 281.4 184 281.6 181 281.3 179 280 176 278.4 174 276 172 272.6 170 269 168.6 265 167.6 260 166.8 255 166.5 250 166.5 244 167 238 168 232 169.3 226 170.9 220 172.9 213 175.6 207 178.4 201 181.5 196.2 184.4 198.5 186Z" fill="#ff6700"/>
<path d="M234 215.8 241 213.4 246 211.4 251 209 256 206.3 259.9 204 264.2 201 268 198 271.2 195 273.9 192 275.9 189 277.2 186 277.7 184 277.7 181 277.2 179 276.2 177 274.5 175 271.9 173 269 171.4 265 170 261 169.1 257 168.6 252 168.3 247 168.5 242 169 237 169.8 231 171.1 225 172.7 219 174.8 213 177.1 208 179.4 203 182 197.5 185.2Z" fill="#ff5c00"/>
<path d="M232.7 214.8 238 213 243 211.1 247.5 209 252 206.7 256.6 204 260 201.8 263.7 199 267 196 269.8 193 271.9 190 273.4 187 273.9 185 274 182 273.5 180 272.4 178 271 176.4 269 174.8 266 173.1 263 172 258.9 171 255 170.5 250 170.2 245 170.4 240 170.9 235 171.8 230 172.9 224 174.6 219 176.2 213 178.6 208 180.9 203 183.5 198.7 186.1 232.4 214.5Z" fill="#ff5100"/>
<path d="M231.5 213.7 241 210.3 246 208.1 250 206 254 203.7 257.9 201 260.5 199 263.9 196 266.6 193 268 191 269.6 188 270.1 186 270.3 184 270.1 182 269.3 180 267.8 178 265.3 176 263 174.8 260 173.7 256 172.7 252 172.3 248 172.1 244 172.2 239 172.7 234 173.5 229 174.6 224 176 219 177.7 214 179.7 209 181.9 204 184.5 199.8 187.1Z" fill="#ff4500"/>
<path d="M230.3 212.7 235.5 211 240.5 209 244.8 207 248.5 205 254.8 201 257.4 199 260.8 196 263.4 193 264.8 191 265.8 189 266.4 187 266.6 185 266.4 183 265.5 181 263.9 179 262 177.5 259 176 256 175.1 253 174.5 249 174 245 174 241 174.2 237 174.6 233 175.3 228 176.4 223 177.8 218 179.6 214 181.1 209 183.4 204.2 186 200.9 188Z" fill="#ff3a00"/>
<path d="M229 211.6 237 208.8 241.1 207 245 205 251.5 201 256.4 197 259.2 194 260.7 192 261.8 190 262.5 188 262.7 186 262.4 184 261.5 182 260.7 181 259 179.5 256.2 178 253.2 177 251 176.5 248 176.1 244 176 240 176.1 236 176.5 228 178 223 179.4 218.3 181 213.4 183 209.1 185 202.2 189Z" fill="#ff2f00"/>
<path d="M227.5 210.3 231.8 209 236 207.4 243 204 246.4 202 249.3 200 251.7 198 253.9 196 255.6 194 256.9 192 257.9 190 258.4 188 258.3 186 258.1 185 257 183.1 256 182 254.6 181 252 179.7 249.7 179 247 178.5 244 178.2 240 178.2 233 178.8 225 180.6 217.6 183 210.8 186 207 188 203.5 190.2Z" fill="#ff2400"/>
<path d="M225.8 208.9 232 207 238.7 204 243.8 201 246.6 199 248.9 197 250.7 195 252.2 193 253.5 190 253.7 188 253.5 187 253 185.7 252 184.3 250.4 183 248.3 182 244 180.9 241 180.6 238 180.6 232 181.1 225 182.6 217.5 185 210.9 188 205.1 191.5Z" fill="#ff1800"/>
<path d="M224 207.3 229 205.8 235 203.3 239.1 201 243.2 198 246.1 195 247.9 192 248.3 190 248.2 189 247.9 188 247 186.6 246 185.7 244 184.6 242.2 184 240 183.6 235 183.4 229 184 223 185.4 217 187.5 211.7 190 207 193Z" fill="#ff0d00"/>
<path d="M221.4 205.2 226 204 231 202.1 234.8 200 237.6 198 238.7 197 240.4 195 241.5 193 241.7 192 241.6 191 241.3 190 240.6 189 239.2 188 238 187.5 235 186.9 231 186.8 226 187.5 221 188.8 217 190.4 212.2 193 209.4 195.1Z" fill="#ff0200"/>
<rect x="150" y="90" width="245" height="175" fill="url(#lit)"/>
<rect x="150" y="90" width="245" height="175" fill="url(#lit2)"/>
<rect x="150" y="90" width="245" height="175" fill="url(#lit3)"/>
<path d="M171.6 152.9 185 144 197.9 136 210 129 221.6 123 228 120 238 116 244 114 247.7 113 256.9 111 265 110 273 109.8 280.7 110 289.3 111 299.6 113 310.8 116 320 119 328 122 331.5 123.5M167.8 164.3 181 155.4 196 146.3 210 138.7 223 132.4 235 127.5 244 124.6 253 122.4 258 121.5 264 120.8 273 120.3 282 120.6 289 121.4 295 122.4 304 124.5 311 126.4 317 128.4 325 131.4 330 133.6 342 139.3 350.6 144.2M375.9 171.7 376.2 174 376.2 175.6M286.7 236.5 275 240.7 267 243.1M172.8 167.4 181 162 189.2 157 196.1 153 205.4 148 213.4 144 222 140 227 138 235 135 241.2 133 248.8 131 253.5 130 260 129 267 128.4 273 128.2 279 128.4 286 128.9 293.1 130 302.1 132 312 135 320 138 328.9 142 334.6 145 341.2 149 348 153.9 352.4 158 355.9 162 358 165.3 359 167.3 360 170 360.5 174 360.2 178 359 181.8 357.1 185.3M306.8 220.4 297 225 282.8 231 272.1 235 262.1 238.2M179.2 171.5 189 165.4 201 158.7 214 152.3 225 147.7 235 144.2 245 141.4 255 139.4 264 138.4 274 138.2 283 138.8 288 139.5 293 140.5 298 141.7 303 143.2 312 146.6 316 148.4 320.8 151 325 153.6 328.4 156 331 158.2 333.8 161 336.9 165 338.9 169 339.5 171 339.9 173 340 175 339.8 177 338.7 181 336.7 185 333.7 189 328.8 194 322.8 199 315 204.4 305 210.5 296 215.4 286 220.3 276 224.8 266 228.7 255.5 232.3M262.5 148 269 147.9 274 148.2 281 148.9 286 149.9 294 152.1 299.2 154 303.4 156 307 158 310 160 313.5 163 316.2 166 318 169 319.2 172 319.7 175 319.5 178 319 180.3 318 183 316 186.4 313.3 190 310.4 193 306 197 298 203 291.8 207 286.7 210 275.4 216 269 219 261.9 222 254 225 249.1 226.6M185.6 175.5 193 171 204.3 165 215 160 225.3 156 231.1 154 237.9 152 246 150.1 253 148.9 262.5 148M249.2 160 259 159.4 264 159.5 269 160 274.8 161 278 161.8 283.8 164 286 165.1 289 167 291.4 169 293.2 171 294.5 173 295.4 175 296 178 295.9 180 295.3 183 294.5 185 293 187.8 291.4 190 289 192.9 286.9 195 283.5 198 279.7 201 275.4 204 270.7 207 261.5 212 252.8 216 247.8 218 241.3 220.3M192.8 180.5 199 176.9 206.6 173 213.2 170 220.8 167 227 164.9 234 162.9 242.6 161 249.2 160M237 173 244 172.2 250 172.1 256 172.7 261 174 263.4 175 265.3 176 266.7 177 268 178.3 269 179.6 269.7 181 270.3 183 270.3 185 269.6 188 268.6 190 267.3 192 263.9 196 259.3 200 253.4 204 247 207.6 240 210.8 232.9 213.3M200.9 186.4 205 184 210 181.4 219 177.7 228 174.9 237 173" fill="none" stroke="#a4a4a4" stroke-width="0.85" stroke-opacity="0.9"/>
</g></g>
<path d="M36.2 175.1L142.9 267.5M142.9 267.5L406.9 112.2" fill="none" stroke="#2c2c34" stroke-width="0.65"/>
<path d="M142.9 267.5L155.8 361.4" fill="none" stroke="#6a6a78" stroke-width="0.7"/>
<path d="M186.8 341.5L189 343.5M216.7 322.4L219 324.3M245.7 303.8L248 305.7M273.7 285.9L276.1 287.7M300.8 268.5L303.2 270.3M327.1 251.7L329.5 253.4M352.5 235.4L355 237.1M377.2 219.6L379.7 221.3M401.1 204.3L403.6 205.9M73.7 284.6L71.1 286.1M93 302.7L90.5 304.2M113.1 321.5L110.5 323M134 341L131.5 342.6M53.4 258.6L50.8 260M48.5 234.7L45.9 236.2M43.4 210L40.7 211.4M38.1 184.3L35.4 185.7" fill="none" stroke="#222" stroke-width="0.8"/>
<text transform="matrix(0.747 0.665 -0.842 0.539 193 347.8)" font-size="9.6" text-anchor="middle" dy="3.5" fill="#333" >4</text>
<text transform="matrix(0.762 0.648 -0.842 0.539 223.2 328.2)" font-size="9.6" text-anchor="middle" dy="3.5" fill="#333" >6</text>
<text transform="matrix(0.776 0.631 -0.842 0.539 251 309.4)" font-size="9.6" text-anchor="middle" dy="3.5" fill="#333" >8</text>
<text transform="matrix(0.789 0.614 -0.842 0.539 282.3 292.6)" font-size="9.6" text-anchor="middle" dy="3.5" fill="#333" >10</text>
<text transform="matrix(0.801 0.599 -0.842 0.539 309.7 275)" font-size="9.6" text-anchor="middle" dy="3.5" fill="#333" >12</text>
<text transform="matrix(0.812 0.583 -0.842 0.539 336.8 258.5)" font-size="9.6" text-anchor="middle" dy="3.5" fill="#333" >14</text>
<text transform="matrix(0.823 0.568 -0.842 0.539 362.1 241.8)" font-size="9.6" text-anchor="middle" dy="3.5" fill="#333" >16</text>
<text transform="matrix(0.832 0.554 -0.842 0.539 386.8 226.1)" font-size="9.6" text-anchor="middle" dy="3.5" fill="#333" >18</text>
<text transform="matrix(0.841 0.540 -0.842 0.539 409.9 210.1)" font-size="9.6" text-anchor="middle" dy="3.5" fill="#333" >20</text>
<text transform="matrix(0.997 -0.573 0.730 0.683 65.8 289.3)" font-size="10.5" text-anchor="middle" dy="3.8" fill="#222" >2</text>
<text transform="matrix(0.991 -0.584 0.730 0.683 85 307.8)" font-size="10.5" text-anchor="middle" dy="3.8" fill="#222" >4</text>
<text transform="matrix(0.984 -0.596 0.730 0.683 104.5 326.6)" font-size="10.5" text-anchor="middle" dy="3.8" fill="#222" >6</text>
<text transform="matrix(0.976 -0.608 0.730 0.683 125.5 346.2)" font-size="10.5" text-anchor="middle" dy="3.8" fill="#222" >8</text>
<text transform="matrix(1.111 -0.298 -0.208 0.978 29.1 189.1)" font-size="11.3" text-anchor="middle" dy="4.1" fill="#222" >8</text>
<text transform="matrix(1.111 -0.298 -0.208 0.978 34.7 214.5)" font-size="11.3" text-anchor="middle" dy="4.1" fill="#222" >6</text>
<text transform="matrix(1.111 -0.298 -0.208 0.978 39.4 239.2)" font-size="11.3" text-anchor="middle" dy="4.1" fill="#222" >4</text>
<text transform="matrix(1.111 -0.298 -0.208 0.978 45.3 263.3)" font-size="11.3" text-anchor="middle" dy="4.1" fill="#222" >2</text>
<text transform="matrix(0.952 -0.609 0.795 0.606 308.6 293.8)" font-size="14.3" text-anchor="middle" dy="5.1" fill="#111" >Y Distance</text>
<text transform="matrix(0.719 0.673 -0.859 0.513 75.9 329.6)" font-size="14.0" text-anchor="middle" dy="5" fill="#111" >X Distance</text>
<text transform="matrix(0.182 0.881 -0.882 0.471 24 234.2)" font-size="15.4" text-anchor="middle" dy="5.5" fill="#111" >Height</text>
<rect x="426" y="90" width="17" height="208" fill="url(#cbar)"/>
<rect x="426" y="297" width="17" height="1.5" fill="#000"/>
<text transform="translate(445.8 299.5) scale(0.84 1)" font-size="8.6" fill="#585858">0</text>
<text transform="translate(445.8 278.9) scale(0.84 1)" font-size="8.6" fill="#585858">1</text>
<text transform="translate(445.8 258.3) scale(0.84 1)" font-size="8.6" fill="#585858">2</text>
<text transform="translate(445.8 237.7) scale(0.84 1)" font-size="8.6" fill="#585858">3</text>
<text transform="translate(445.8 217.1) scale(0.84 1)" font-size="8.6" fill="#585858">4</text>
<text transform="translate(445.8 196.5) scale(0.84 1)" font-size="8.6" fill="#585858">5</text>
<text transform="translate(445.8 175.9) scale(0.84 1)" font-size="8.6" fill="#585858">6</text>
<text transform="translate(445.8 155.3) scale(0.84 1)" font-size="8.6" fill="#585858">7</text>
<text transform="translate(445.8 134.7) scale(0.84 1)" font-size="8.6" fill="#585858">8</text>
<text transform="translate(445.8 114.1) scale(0.84 1)" font-size="8.6" fill="#585858">9</text>
<text transform="translate(445.8 93.5) scale(0.84 1)" font-size="8.6" fill="#585858">10</text>
<text x="416.9" y="79.6" font-size="10" fill="#222" textLength="34.6" lengthAdjust="spacingAndGlyphs">Pressure</text>
</svg>
  <div class="wbtn" style="left:404px;width:32px;"></div>
  <div class="wbtn" style="left:438px;width:32px;"></div>
  <div class="wbtn" style="left:472px;width:32px;"></div>
  <svg style="left:0;top:0" width="512" height="30" viewBox="0 0 512 30">
  <!-- app icon -->
  <rect x="7" y="8" width="15.4" height="15.2" fill="#000"/>
  <rect x="7.6" y="8.6" width="13.5" height="12.6" fill="#fff"/>
  <rect x="9.6" y="9.9" width="10.2" height="4.3" fill="#0ff"/>
  <rect x="9.6" y="15.3" width="10.2" height="4.1" fill="#0ff"/>
  <path d="M9 14.8H20.4" stroke="#f03030" stroke-width="0.9" stroke-dasharray="1.3 0.9"/>
  <path d="M8.6 9.4V21M20.5 9.4V21" stroke="#ff5050" stroke-width="0.8" stroke-dasharray="1 1.3"/>
  <path d="M8.4 9.3H20.8" stroke="#ff6060" stroke-width="0.7"/>
  <path d="M10.4 12.4l1.6-.7 1.6.3 1.6-.9 1.6.4 1.8-.5" fill="none" stroke="#111" stroke-width="1"/>
  <path d="M9.6 19.2l1.4-1.6" fill="none" stroke="#d00020" stroke-width="1.6"/>
  <path d="M11 17.6l2-1 2-.2 2 .6 2.2-.2" fill="none" stroke="#c020e0" stroke-width="1"/>
  <path d="M12.5 18.4l2.5-.3 2.5.4 2 .1" fill="none" stroke="#203080" stroke-width="0.8"/>
  <path d="M8.2 21a1.1 1.1 0 0 0 2.4 0a1.1 1.1 0 0 0 2.5 0a1.1 1.1 0 0 0 2.5 0a1.1 1.1 0 0 0 2.5 0a1.1 1.1 0 0 0 2.4 0z" fill="#fff"/>
  <!-- minimise -->
  <rect x="414.5" y="15.5" width="11" height="4" rx="1" fill="#fbfbfd" stroke="#50555e" stroke-width="1"/>
  <!-- maximise -->
  <rect x="448.5" y="11.5" width="10" height="8" rx="1" fill="#fbfbfd" stroke="#50555e" stroke-width="1"/>
  <rect x="451.5" y="14.5" width="4" height="2.2" fill="#c9d6e6" stroke="#50555e" stroke-width="0.9"/>
  <!-- close -->
  <path d="M482 11.6h3.4l1.9 2.2 1.9-2.2h3.4l-3.6 4 3.6 4h-3.4l-1.9-2.2-1.9 2.2h-3.4l3.6-4z" fill="#fdfdfe" stroke="#4a4f58" stroke-width="1.1" stroke-linejoin="round"/>
</svg>

  <div class="t" id="t_title" style="left:26.58px;top:9.0px;font-size:13px;color:#9a9a9a;transform:scaleX(0.9182);">Surface with Custom Boundary *</div>
  <div class="t" id="t_one" style="left:13.6px;top:33.2px;font-size:15px;-webkit-text-stroke:0.8px #000;">1</div>
  <div class="abs" id="cov1" style="left:11px;top:43.5px;width:5.9px;height:4px;background:#c0c0c0;"></div>
  <div class="abs" id="cov2" style="left:19.4px;top:43.5px;width:5px;height:4px;background:#c0c0c0;"></div>
  <div id="shadow"></div>
</div>
<div id="topline"></div>

<!-- ================= dialog ================= -->
<div id="dlgtitle"></div>
<svg style="left:0;top:365px" width="715" height="30" viewBox="0 0 715 30">
  <defs>
    <linearGradient id="di1" x1="0" y1="0" x2="0" y2="1"><stop offset="0" stop-color="#5c8db8"/><stop offset="0.45" stop-color="#3f9488"/><stop offset="1" stop-color="#4caa6c"/></linearGradient>
    <linearGradient id="di2" x1="0" y1="0" x2="0" y2="1"><stop offset="0" stop-color="#7aa2d2"/><stop offset="1" stop-color="#9bd6a0"/></linearGradient>
  </defs>
  <rect x="8.5" y="8" width="14" height="11.5" fill="#fcfcfc" stroke="#b2b5bb" stroke-width="1"/>
  <rect x="9.2" y="8.6" width="12.6" height="1.2" fill="#e4e6ea"/>
  <rect x="10" y="10.2" width="5.2" height="7.6" fill="url(#di1)"/>
  <rect x="16.2" y="10.2" width="2.6" height="7.6" fill="#e3e3e3"/>
  <rect x="19.4" y="10" width="2.2" height="4.6" fill="url(#di2)"/>
  <path d="M695 9l10 10M705 9l-10 10" stroke="#111" stroke-width="1.1" fill="none"/>
</svg>

<div class="t" id="t_dlg" style="left:28.95px;top:371.5px;transform:scaleX(0.9543);">Plot Details - Layer Properties</div>
<div class="t" id="t_q" style="left:651.6px;top:371.6px;font-size:13.5px;-webkit-text-stroke:0.25px #000;">?</div>

<div id="tree"></div>
<svg style="left:0;top:395px" width="180" height="335" viewBox="0 395 180 335">
  <!-- chevrons -->
  <path d="M13.6 412.4l4 4 4-4" fill="none" stroke="#404040" stroke-width="1.5"/>
  <path d="M32.6 432.4l4 4 4-4" fill="none" stroke="#404040" stroke-width="1.5"/>
  <!-- dotted connectors -->
  <path d="M26 415.5h1M28 415.5h1M37 425.5h1M45 435.5h1M47 435.5h1" stroke="#707070" stroke-width="1" shape-rendering="crispEdges"/>
  <path d="M56.5 445V455.5H67.5" fill="none" stroke="#707070" stroke-width="1" stroke-dasharray="1 1" shape-rendering="crispEdges"/>
  <!-- folder -->
  <defs><linearGradient id="fg1" x1="0" y1="0" x2="0" y2="1"><stop offset="0" stop-color="#fff0b8"/><stop offset="0.5" stop-color="#fbd568"/><stop offset="1" stop-color="#eaa62c"/></linearGradient>
  <linearGradient id="fg2" x1="0" y1="0" x2="0" y2="1"><stop offset="0" stop-color="#f7d98a"/><stop offset="1" stop-color="#e8b84a"/></linearGradient></defs>
  <path d="M29.7 420.3V411.1q0-.9.9-.9h3.5l1.7 1.7h6.3q.9 0 .9.9v1.3" fill="url(#fg2)" stroke="#c9962a" stroke-width="0.8"/>
  <path d="M29.6 420.5l2.5-6.3h12.7l-2.9 6.3z" fill="url(#fg1)" stroke="#b9851e" stroke-width="0.8" stroke-linejoin="round"/>
  <path d="M30 420.9h11.8" stroke="#5a4410" stroke-width="0.9" opacity="0.75"/>
  <!-- scrollbar -->
  <rect x="7" y="708" width="169" height="16" fill="#f0f0f0"/>
  <rect x="24" y="708" width="39" height="15.4" fill="#cdcdcd"/>
  <path d="M17.5 712.4l-3.6 3.5 3.6 3.5" fill="none" stroke="#505050" stroke-width="2.3"/>
  <path d="M165.5 712.4l3.6 3.5-3.6 3.5" fill="none" stroke="#505050" stroke-width="2.3"/>
</svg>
<div class="abs" style="left:46px;top:425px;width:61px;height:20px;background:#d9d9d9;"></div>
<div class="cb" style="left:49px;top:428px;"></div>
<div class="cb" style="left:68px;top:448px;"></div>
<svg style="left:0;top:395px" width="180" height="80" viewBox="0 395 180 80">
  <path d="M51.6 434.6l3 3.2 5.6-6.6" fill="none" stroke="#222" stroke-width="1.1"/>
  <path d="M70.6 454.6l3 3.2 5.6-6.6" fill="none" stroke="#222" stroke-width="1.1"/>
</svg>
<div class="t" id="t_g52" style="left:51.09px;top:406.5px;transform:scaleX(0.9023);">Graph52</div>
<div class="t" id="t_l1" style="left:69.64px;top:426.5px;transform:scaleX(0.8622);">Layer1</div>
<div class="abs" style="left:6px;top:445px;width:170px;height:20px;overflow:hidden;"><div class="t" id="t_surf" style="left:82.1px;top:2.3px;transform:scaleX(0.957);">[Surface with Custom Boundary]</div></div>


<div class="tab" style="left:193px;width:74px;"></div>
<div class="tab" style="left:266px;width:49px;"></div>
<div class="tab" style="left:314px;width:85px;"></div>
<div class="tab" style="left:486px;width:47px;"></div>
<div class="tab" style="left:532px;width:49px;"></div>
<div class="tab" style="left:580px;width:49px;"></div>
<div class="tab" style="left:628px;width:54px;"></div>
<div id="panel"></div>
<div id="tabsel"></div>
<div class="t" id="t_tab1" style="font-size:11.4px;left:199.3px;top:407.4px;letter-spacing:0.103px;">Background</div>
<div class="t" id="t_tab2" style="font-size:11.4px;left:273.7px;top:407.4px;transform:scaleX(0.8906);">Size</div>
<div class="t" id="t_tab3" style="font-size:11.4px;left:321.41px;top:407.4px;transform:scaleX(0.9902);">Display/Speed</div>
<div class="t" id="t_tab4" style="font-size:11.4px;left:405.6px;top:405.4px;letter-spacing:0.069px;">Miscellaneous</div>
<div class="t" id="t_tab5" style="font-size:11.4px;left:491.08px;top:407.4px;transform:scaleX(0.918);">Axis</div>
<div class="t" id="t_tab6" style="font-size:11.4px;left:538.55px;top:407.4px;transform:scaleX(0.9505);">Planes</div>
<div class="t" id="t_tab7" style="font-size:11.4px;left:587.27px;top:407.4px;transform:scaleX(0.9369);">Stack</div>
<div class="t" id="t_tab8" style="font-size:11.4px;left:635.0px;top:407.4px;letter-spacing:0.418px;">Lighting</div>

<!-- clipping group -->
<div class="abs" style="left:209px;top:441px;width:184px;height:163px;box-sizing:border-box;border:1px solid #dcdcdc;"></div>
<div class="abs" style="left:216px;top:436px;width:49px;height:12px;background:#fff;"></div>
<div class="t" id="t_clip" style="left:218.23px;top:433.9px;letter-spacing:0.137px;">Clipping</div>

<div class="cb" style="left:227px;top:460px;"></div>
<svg style="left:227px;top:460px" width="13" height="13" viewBox="0 0 13 13"><path d="M2.6 6.6l3 3.2 5.6-6.6" fill="none" stroke="#222" stroke-width="1.1"/></svg>
<div class="t" id="t_enable" style="left:242.87px;top:458.9px;transform:scaleX(0.9269);">Enable</div>
<div class="rb" style="left:232px;top:484px;"></div>
<div class="t" id="t_bypct" style="left:248.33px;top:482.7px;transform:scaleX(0.9511);">by Percent</div>
<div class="rb" style="left:318px;top:484px;"></div>
<div class="abs" style="left:321px;top:487px;width:7px;height:7px;border-radius:50%;background:#333;"></div>
<div class="t" id="t_byval" style="left:333.93px;top:482.7px;transform:scaleX(0.9493);">by Value</div>

<div class="t" id="t_X" style="left:224.66px;top:511.1px;">X</div>
<div class="inp" style="left:248px;top:508px;width:49px;"></div>
<div class="t" id="t_x0" style="left:254.09px;top:510.6px;">0</div>
<div class="t" id="t_d1" style="left:304.39px;top:512.0px;">-</div>
<div class="inp" style="left:323px;top:508px;width:49px;"></div>
<div class="t" id="t_x1" style="left:329.23px;top:510.6px;transform:scaleX(0.8664);">10</div>

<div class="t" id="t_Y" style="left:224.7px;top:541.1px;">Y</div>
<div class="inp" style="left:248px;top:538px;width:49px;"></div>
<div class="t" id="t_y0" style="left:254.23px;top:540.6px;transform:scaleX(0.8664);">10</div>
<div class="t" id="t_d2" style="left:304.39px;top:542.0px;">-</div>
<div class="inp" style="left:323px;top:538px;width:49px;"></div>
<div class="t" id="t_y1" style="left:329.22px;top:540.6px;transform:scaleX(0.8833);">18</div>

<div class="t" id="t_Z" style="left:225.12px;top:571.1px;">Z</div>
<div class="inp" style="left:248px;top:568px;width:49px;"></div>
<div class="t" id="t_z0" style="left:254.2px;top:570.6px;transform:scaleX(0.9014);">1.25</div>
<div class="t" id="t_d3" style="left:304.39px;top:572.0px;">-</div>
<div class="inp" style="left:323px;top:568px;width:49px;"></div>
<div class="t" id="t_z1" style="left:329.25px;top:570.6px;transform:scaleX(0.9046);">8.7</div>

<!-- right column -->
<div class="t" id="t_proj" style="left:405.31px;top:448.6px;transform:scaleX(0.9852);">Projection</div>
<div class="abs" style="left:466px;top:446px;width:109px;height:23px;box-sizing:border-box;border:1px solid #adadad;background:#e1e1e1;"></div>
<div class="t" id="t_persp" style="left:470.36px;top:450.0px;transform:scaleX(0.9373);">Perspective</div>
<svg style="left:561px;top:454px;" width="10" height="8" viewBox="0 0 10 8"><path d="M1.2 1.9 L5.2 5.9 L9.2 1.9" fill="none" stroke="#404040" stroke-width="1.1"/></svg>

<div class="t" id="t_pang" style="left:405.34px;top:484.2px;transform:scaleX(0.9564);">Perspective Angle (0-30)</div>
<div class="inp" style="left:554px;top:481px;width:49px;"></div>
<div class="t" id="t_pval" style="left:560.64px;top:483.5px;transform:scaleX(0.8636);">10.0</div>

<div class="cb" style="left:405px;top:531px;"></div>
<div class="t" id="t_shear" style="left:420.87px;top:530.2px;transform:scaleX(0.932);">Enable Shearing</div>

<div class="t" id="t_xoff" style="left:404.69px;top:557.8px;color:#a0a0a0;transform:scaleX(0.9569);">X Offset</div>
<div class="inp dis" style="left:468px;top:554px;width:49px;"></div>
<div class="t" id="t_xov" style="left:474.37px;top:556.7px;color:#6d6d6d;transform:scaleX(0.8251);">0</div>
<div class="t" id="t_zoff" style="left:404.92px;top:587.6px;color:#a0a0a0;transform:scaleX(0.9667);">Z Offset</div>
<div class="inp dis" style="left:468px;top:584px;width:49px;"></div>
<div class="t" id="t_zov" style="left:474.37px;top:586.6px;color:#6d6d6d;transform:scaleX(0.8251);">0</div>

<!-- buttons -->
<div class="btn" style="left:192px;width:31px;"></div>
<div class="t" id="t_gg" style="font-size:10.5px;left:199.29px;top:743.4px;letter-spacing:2.315px;">&gt;&gt;</div>
<div class="btn" style="left:341px;width:63px;border:2px solid #0078d7;"></div>
<div class="t" id="t_ok" style="left:363.8px;top:743.4px;transform:scaleX(0.9354);">OK</div>
<div class="btn" style="left:416px;width:63px;"></div>
<div class="t" id="t_cancel" style="left:428.75px;top:743.4px;transform:scaleX(0.9713);">Cancel</div>
<div class="btn" style="left:496px;width:63px;"></div>
<div class="t" id="t_apply" style="left:512.06px;top:743.4px;letter-spacing:0.16px;">Apply</div>
</body>
</html>
